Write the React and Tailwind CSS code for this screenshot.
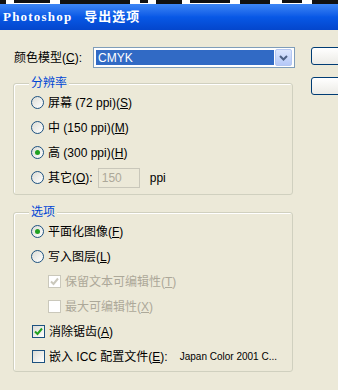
import React from 'react';

const font = { fontFamily: '"Liberation Sans", "Noto Sans CJK SC", sans-serif' };

const Radio = ({ checked }) => (
  <span className="w-[13px] h-[13px] rounded-full border border-[#1c5180] bg-gradient-to-br from-[#dcdcd5] to-white flex items-center justify-center shrink-0">
    {checked && <span className="w-[5px] h-[5px] rounded-full bg-[#21a121]" />}
  </span>
);

const Check = ({ checked, disabled }) => (
  <span
    className={`w-[13px] h-[13px] border flex items-center justify-center shrink-0 ${
      disabled ? 'border-[#cac8bb] bg-white' : 'border-[#1c5180] bg-gradient-to-br from-[#dcdcd5] to-white'
    }`}
  >
    {checked && (
      <svg width="9" height="9" viewBox="0 0 9 9">
        <path d="M1 4.5 L3.5 7 L8 1.5" fill="none" stroke={disabled ? '#cac8bb' : '#21a121'} strokeWidth="2" />
      </svg>
    )}
  </span>
);

const Label = ({ text, hot, tail = '', disabled }) => (
  <span className={`text-[12px] leading-none whitespace-nowrap ${disabled ? 'text-[#aca899]' : 'text-black'}`}>
    {text}(<u>{hot}</u>){tail}
  </span>
);

const Group = ({ title, children, className }) => (
  <div className={`relative border border-[#d0d0bf] rounded-[3px] shadow-[inset_1px_1px_0_#fff] ${className}`}>
    <span className="absolute -top-[9px] left-[15px] px-[2px] bg-[#ece9d8] text-[12px] leading-[16px] text-[#0046d5]">{title}</span>
    {children}
  </div>
);

const Row = ({ children, indent = 'pl-[17px]' }) => (
  <div className={`h-[25px] flex items-center gap-[4px] ${indent}`}>{children}</div>
);

export default function App() {
  return (
    <div className="w-[338px] h-[390px] overflow-hidden bg-[#ece9d8] flex flex-col" style={font}>
      <svg width="338" height="4" className="block shrink-0">
        <rect width="338" height="4" fill="#fff" />
        <rect x="0" y="0" width="6" height="4" fill="#111" />
        <rect x="14" y="0" width="36" height="3" fill="#111" />
        <rect x="60" y="0" width="70" height="4" fill="#111" />
        <rect x="140" y="0" width="8" height="3" fill="#111" />
        <rect x="156" y="0" width="26" height="4" fill="#111" />
        <rect x="190" y="0" width="40" height="3" fill="#111" />
        <rect x="240" y="0" width="30" height="4" fill="#111" />
        <rect x="282" y="0" width="20" height="3" fill="#111" />
        <rect x="312" y="0" width="26" height="4" fill="#111" />
      </svg>
      <div className="h-[26px] shrink-0 bg-gradient-to-b from-[#3d86f5] via-[#0858e6] to-[#0446cc] flex items-center pl-[3px] gap-[12px] text-white font-bold">
        <span className="text-[13px] tracking-[1.2px]" style={{ fontFamily: '"Liberation Serif", serif' }}>Photoshop</span>
        <span className="text-[13px] tracking-[1px]">导出选项</span>
      </div>

      <div className="flex pt-[17px]">
        <div className="w-[297px] shrink-0 flex flex-col">
          <div className="h-[21px] flex items-center">
            <span className="w-[93px] shrink-0 pl-[14px] text-[12px] whitespace-nowrap">颜色模型(<u>C</u>):</span>
            <div className="w-[202px] h-[21px] border border-[#7f9db9] bg-white flex items-center p-[2px]">
              <div className="flex-1 h-full bg-[#316ac5] text-white text-[12px] flex items-center pl-[2px]">CMYK</div>
              <div className="w-[17px] h-[17px] ml-[1px] rounded-[2px] bg-gradient-to-b from-[#dce6fd] to-[#b5c8f7] border border-[#b4c7f2] flex items-center justify-center">
                <svg width="9" height="6" viewBox="0 0 9 6">
                  <path d="M1 1 L4.5 4.5 L8 1" fill="none" stroke="#4d6185" strokeWidth="2" />
                </svg>
              </div>
            </div>
          </div>

          <Group title="分辨率" className="ml-[13px] w-[280px] h-[112px] mt-[15px] pt-[6px]">
            <Row><Radio /><Label text="屏幕 (72 ppi)" hot="S" /></Row>
            <Row><Radio /><Label text="中 (150 ppi)" hot="M" /></Row>
            <Row><Radio checked /><Label text="高 (300 ppi)" hot="H" /></Row>
            <Row>
              <Radio /><Label text="其它" hot="O" tail=":" />
              <div className="ml-[1px] w-[42px] h-[20px] border border-[#c9c7ba] bg-[#ece9d8] text-[12px] text-[#aca899] flex items-center pl-[3px]">150</div>
              <span className="ml-[6px] text-[12px]">ppi</span>
            </Row>
          </Group>

          <Group title="选项" className="ml-[13px] w-[280px] h-[160px] mt-[17px] pt-[6px]">
            <Row><Radio checked /><Label text="平面化图像" hot="F" /></Row>
            <Row><Radio /><Label text="写入图层" hot="L" /></Row>
            <Row indent="pl-[34px]"><Check checked disabled /><Label text="保留文本可编辑性" hot="T" disabled /></Row>
            <Row indent="pl-[34px]"><Check disabled /><Label text="最大可编辑性" hot="X" disabled /></Row>
            <Row indent="pl-[18px]"><Check checked /><Label text="消除锯齿" hot="A" /></Row>
            <Row indent="pl-[18px]">
              <Check /><Label text="嵌入 ICC 配置文件" hot="E" tail=":" />
              <span className="ml-[8px] text-[10px] whitespace-nowrap">Japan Color 2001 C...</span>
            </Row>
          </Group>
        </div>

        <div className="ml-[14px] flex flex-col gap-[12px]">
          <div className="w-[75px] h-[18px] rounded-[3px] border border-[#003c74] bg-gradient-to-b from-white to-[#ecebe6]" />
          <div className="w-[75px] h-[18px] rounded-[3px] border border-[#003c74] bg-gradient-to-b from-white to-[#ecebe6]" />
        </div>
      </div>
    </div>
  );
}
